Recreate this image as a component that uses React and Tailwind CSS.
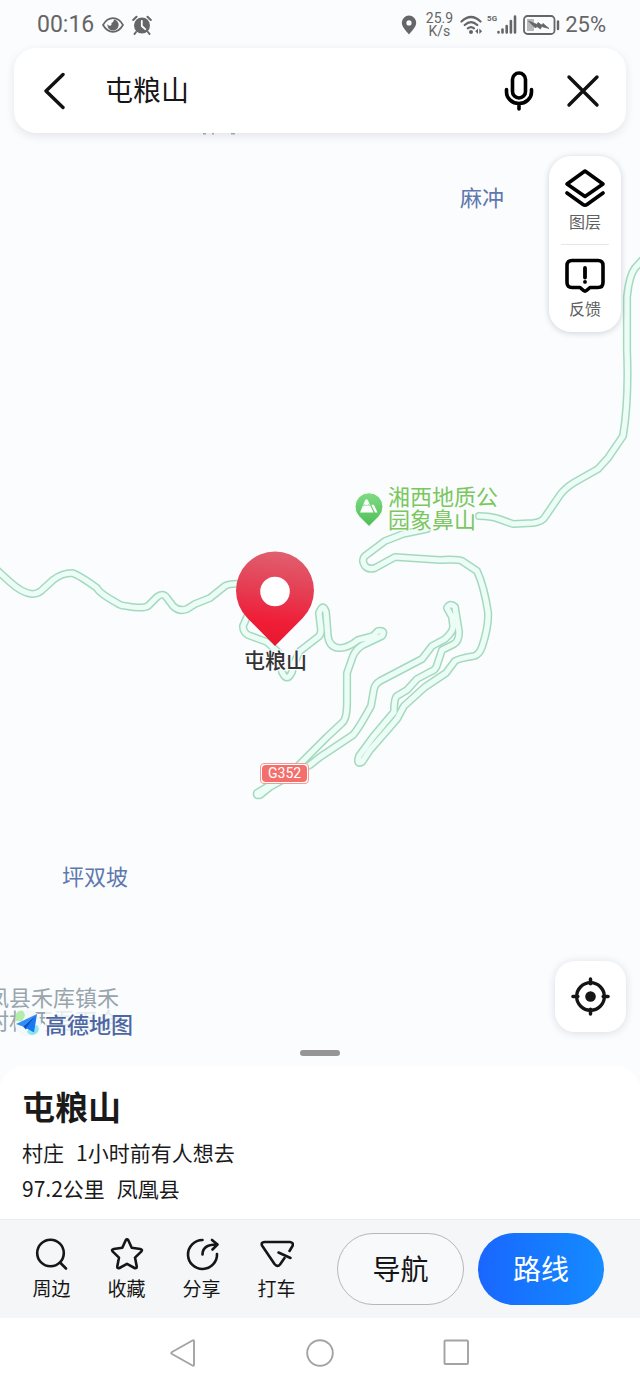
const ROADS = [
  'M-4 569 L0 573 L10 582 Q22 593 32 594 Q37 594 41 591 L53 580 Q62 573 72 573 Q79 575 97 588 Q99 593 117 603 Q121 606 126 606 Q143 609 148 606 L157 597 Q163 592 167 598 L173 606 Q179 612 187 609 L195 604 L210 598 L225 586 Q230 583 243 584 L252 600 L247 617 L243 626 Q243 632 248 635 L267 642 L278 652 L282 672 Q287 683 292 672 L294 663 L300 651 L318 637 Q321 635 321 630 L319 613 Q323 602 326 612 L328 637 Q330 648 340 648 Q348 648 358 640 L373 636 L378 631 Q386 630 382 636 L363 645 Q356 649 353 656 L347 673 L347 703 Q347 719 342 723 L327 737 L297 767 L280 779 L257 793 Q256 796 260 795 L270 787 L310 765 L320 757 L353 735 Q359 728 371 706 L374 689 Q375 684 380 681 L422 659 L432 646 L445 639 Q454 631 453 625 L452 617 L447 608 Q450 602 455 607 L459 632 Q459 641 454 644 L442 650 L437 665 Q436 670 430 672 L417 679 L407 690 L397 696 Q394 698 394 712 L373 737 L359 756 Q356 765 362 762 L370 750 L397 719 L404 706 L425 687 L446 673 L455 661 Q457 659 474 656 Q479 655 482 647 Q489 626 488 612 Q484 586 477 571 L462 561 Q458 559 440 560 L395 557 L375 568 Q369 570 365 566 Q361 560 365 556 L385 541 L403 534 L427 529',
  'M479 516 Q490 516 499 519 L513 524 L533 523 Q542 522 545 517 L560 495 Q565 488 575 482 L598 469 L608 458 L623 436 Q629 400 627 350 L627 297 Q629 276 635 268 L646 256',
];

const LABEL_HALO =
  '[text-shadow:1px_1px_0_#fafcfe,-1px_-1px_0_#fafcfe,1px_-1px_0_#fafcfe,-1px_1px_0_#fafcfe,0_0_3px_#fafcfe]';

function MapLabel({ className, children }) {
  return (
    <span className={`absolute whitespace-nowrap text-[22px] leading-[23px] ${LABEL_HALO} ${className}`}>
      {children}
    </span>
  );
}

function MapCanvas() {
  return (
    <div className="absolute inset-0 overflow-hidden">
      <div className="relative mx-auto h-full w-[640px]">
        <svg width="640" height="1066" viewBox="0 0 640 1066" fill="none" aria-hidden="true">
          <g strokeLinejoin="round" strokeLinecap="round">
            {ROADS.map((d) => (
              <path key={d} d={d} stroke="#a5d9be" strokeWidth="8.2" />
            ))}
            {ROADS.map((d) => (
              <path key={d} d={d} stroke="#ebfdf6" strokeWidth="5.2" />
            ))}
          </g>
          <path d="M203 133.5h3M212 133.5h2M231 133.5h4" stroke="#a9b0b8" strokeWidth="2" />
        </svg>

        <MapLabel className="left-[460px] top-[185px] text-[#6077ad]">麻冲</MapLabel>
        <MapLabel className="left-[62px] top-[864px] text-[#6077ad]">坪双坡</MapLabel>
        <MapLabel className="left-[388px] top-[484px] text-[#79c75d]">
          湘西地质公
          <br />
          园象鼻山
        </MapLabel>
        <MapLabel className="-left-[13px] top-[985px] text-[#98a5ab]">
          凤县禾库镇禾
          <br />
          村村丙吾百合
        </MapLabel>

        <svg className="absolute left-[354px] top-[491px]" width="30" height="37" viewBox="0 0 30 37" aria-hidden="true">
          <defs>
            <linearGradient id="parkPin" x1="0" y1="0" x2="0" y2="1">
              <stop offset="0" stopColor="#7fdc85" />
              <stop offset="1" stopColor="#4fbd55" />
            </linearGradient>
          </defs>
          <path d="M15 35.500 L5 25.500 A14 14 0 1 1 25 25.500Z" fill="url(#parkPin)" stroke="#fff" strokeWidth="1" />
          <path d="M6 21.500 L11 9.500 Q12.500 7 14 9.500 L19.500 21.500Z" fill="#fff" />
          <path d="M17.500 14.500 Q19 12.500 20.500 15 L23.500 21.500H21Z" fill="#fff" />
          <path d="M9 15l2-1.500 1.500 1.500 1.500-1.500 2 1.500" stroke="#7fdc85" fill="none" />
        </svg>

        <span className="absolute left-[260px] top-[763px] rounded border border-[#f19a98] bg-white p-px">
          <span className="block rounded-sm bg-[#f46f6c] px-[6px] font-[Roboto,sans-serif] text-sm leading-[17px] text-white">
            G352
          </span>
        </span>

        <svg className="absolute left-[234px] top-[549px]" width="82" height="98" viewBox="234 549 82 98" aria-hidden="true">
          <defs>
            <linearGradient id="placePin" x1="0.6" y1="0" x2="0.5" y2="1">
              <stop offset="0" stopColor="#e0606f" />
              <stop offset="0.45" stopColor="#e63a50" />
              <stop offset="0.75" stopColor="#f01d37" />
              <stop offset="1" stopColor="#e8162f" />
            </linearGradient>
          </defs>
          <path d="M275 646 L247.500 618.200 A39 39 0 1 1 302.500 618.200Z" fill="url(#placePin)" />
          <circle cx="275" cy="591.500" r="14.800" fill="#fff" />
        </svg>
        <span
          className={`absolute left-[244px] top-[647px] whitespace-nowrap text-[21px] font-medium leading-6 text-[#333] ${LABEL_HALO}`}
        >
          屯粮山
        </span>
      </div>
    </div>
  );
}

function StatusBar() {
  return (
    <div className="flex h-12 items-center justify-between pl-[37px] pr-[34px] pt-px font-[Roboto,sans-serif] text-[#666]">
      <div className="flex items-center gap-2">
        <span className="text-[23px] leading-6">00:16</span>
        <svg width="22" height="18" viewBox="0 0 22 18" fill="none" aria-hidden="true">
          <path d="M1 9 Q5 2.200 11 2.200 T21 9 Q17 15.800 11 15.800 T1 9Z" stroke="currentColor" strokeWidth="1.700" />
          <path d="M12 3.500 A5.600 5.600 0 1 1 5.500 8 Q6.500 10.500 8.800 9.500 Q9.800 9 9.500 7 Q11.500 6.500 12 3.500Z" fill="currentColor" />
        </svg>
        <svg width="20" height="20" viewBox="0 0 20 20" fill="none" aria-hidden="true">
          <circle cx="10" cy="10.500" r="8" fill="currentColor" />
          <path d="M1.200 5 L4.500 1.800M18.800 5 L15.500 1.800M4 17l-1.500 2M16 17l1.500 2" stroke="currentColor" strokeWidth="2" strokeLinecap="round" />
          <path d="M9.800 6v5l3.400 3.200" stroke="#fff" strokeWidth="1.800" strokeLinecap="round" />
        </svg>
      </div>

      <div className="flex items-center">
        <svg className="mr-[9px]" width="16" height="20" viewBox="0 0 16 20" aria-hidden="true">
          <path fillRule="evenodd" fill="currentColor" d="M8 19.500C5 16 .8 11.800 .8 7.800a7.200 7.200 0 0 1 14.400 0c0 4-4.200 8.200-7.200 11.700ZM8 5.300a2.600 2.600 0 1 0 0 5.200 2.600 2.600 0 0 0 0-5.200Z" />
        </svg>
        <span className="mr-[7px] text-center text-sm leading-[13px]">
          25.9
          <br />
          K/s
        </span>
        <svg className="mr-1" width="23" height="20" viewBox="0 0 23 20" fill="none" aria-hidden="true">
          <g stroke="currentColor" strokeWidth="2.200" strokeLinecap="round">
            <path d="M1.500 6.500 Q11 -2.500 20.500 6.500" />
            <path d="M4.700 10 Q11 4.300 17.300 10" />
            <path d="M7.800 13.400 Q11 10.800 14 13.400" />
          </g>
          <circle cx="11" cy="17" r="2" fill="currentColor" />
          <path d="M18 13.500v5.500l-2.800-2.700ZM19.300 13.500v5.500l2.800-2.700Z" fill="currentColor" />
        </svg>
        <span className="self-start pt-[2px] text-[8px] font-bold leading-[9px]">5G</span>
        <svg className="mr-[6px]" width="20" height="19" viewBox="0 0 20 19" fill="none" aria-hidden="true">
          <path d="M1.500 17.500v-.500M5.500 17.500v-3M9.700 17.500V11M13.900 17.500V6M18 17.500V1.500" stroke="currentColor" strokeWidth="2.600" strokeLinecap="round" />
        </svg>
        <svg className="mr-[5px]" width="37" height="20" viewBox="0 0 37 20" fill="none" aria-hidden="true">
          <rect x="1" y="1" width="30.500" height="18" rx="3.500" stroke="currentColor" strokeWidth="1.800" />
          <path d="M4 4h7v12H4Z" fill="#b9b9bb" />
          <path d="M5.500 6 L14 9.500 L15 7.500 L18.500 10 L20 8.500 L26 13.500 L18.500 11.500 L17.500 14 L14 11.500 L12.500 13Z" fill="currentColor" stroke="currentColor" strokeWidth=".8" />
          <path d="M35 6.500v7.500" stroke="currentColor" strokeWidth="2.400" strokeLinecap="round" />
        </svg>
        <span className="text-[22px] leading-6">25%</span>
      </div>
    </div>
  );
}

function SearchBar() {
  return (
    <form className="mx-[14px] flex h-[85px] items-center rounded-[22px] bg-white pl-5 pr-[23px] shadow-[0_3px_10px_rgba(30,40,60,0.10)]">
      <button type="button" aria-label="返回" className="flex size-10 items-center justify-center text-[#111]">
        <svg width="22" height="38" viewBox="0 0 22 38" fill="none" aria-hidden="true">
          <path d="M20 2.500 L3 19 L20 35.500" stroke="currentColor" strokeWidth="3.400" strokeLinecap="round" strokeLinejoin="round" />
        </svg>
      </button>
      <input
        type="text"
        aria-label="搜索地点"
        defaultValue="屯粮山"
        className="ml-[31px] h-11 min-w-0 flex-1 bg-transparent pb-1 text-[28px] leading-10 text-[#161616] outline-none"
      />
      <button type="button" aria-label="语音搜索" className="mr-6 flex size-10 items-center justify-center text-black">
        <svg width="30" height="40" viewBox="0 0 30 40" fill="none" aria-hidden="true">
          <rect x="8.500" y="2" width="13" height="25" rx="6.500" stroke="currentColor" strokeWidth="3.600" />
          <path d="M2.500 18.500v2.500a12.500 11.500 0 0 0 25 0v-2.500M15 33v5" stroke="currentColor" strokeWidth="3.600" strokeLinecap="round" />
        </svg>
      </button>
      <button type="button" aria-label="清除" className="flex size-10 items-center justify-center text-[#111]">
        <svg width="34" height="34" viewBox="0 0 34 34" fill="none" aria-hidden="true">
          <path d="M3 3 L31 31M31 3 L3 31" stroke="currentColor" strokeWidth="3.400" strokeLinecap="round" />
        </svg>
      </button>
    </form>
  );
}

function MapTools() {
  return (
    <div className="mr-[19px] mt-[23px] flex w-[72px] flex-col self-end rounded-[22px] bg-white px-3 shadow-[0_1px_6px_rgba(30,40,60,0.20)]">
      <button type="button" className="flex h-[88px] flex-col items-center pt-3 text-base leading-5 text-[#606060]">
        <svg className="mb-[3px] text-black" width="42" height="40" viewBox="0 0 42 40" fill="none" aria-hidden="true">
          <g stroke="currentColor" strokeWidth="3.600" strokeLinecap="round" strokeLinejoin="round">
            <path d="M21 3 L39 16 L21 28.500 L3 16Z" />
            <path d="M3 25 L19 36.500 Q21 38 23 36.500 L39 25" />
          </g>
        </svg>
        <span>图层</span>
      </button>
      <hr className="border-[#e6e6e8]" />
      <button type="button" className="flex h-[87px] flex-col items-center pt-3 text-base leading-5 text-[#606060]">
        <svg className="mb-[3px] text-black" width="40" height="38" viewBox="0 0 40 38" fill="none" aria-hidden="true">
          <path
            d="M7 3.500H33Q38 3.500 38 8.500V25.500Q38 30.500 33 30.500H25L21.500 33.500Q20 34.800 18.500 33.500L15 30.500H7Q2 30.500 2 25.500V8.500Q2 3.500 7 3.500Z"
            stroke="currentColor"
            strokeWidth="3.600"
            strokeLinejoin="round"
          />
          <path d="M20 11v9.500M20 24.800v.100" stroke="currentColor" strokeWidth="3.800" strokeLinecap="round" />
        </svg>
        <span>反馈</span>
      </button>
    </div>
  );
}

function MapFooter() {
  return (
    <div className="flex flex-col">
      <div className="flex items-end justify-between pl-[15px] pr-[14px]">
        <div className="-mb-1 flex items-center gap-1">
          <svg width="26" height="26" viewBox="0 0 26 26" aria-hidden="true">
            <circle cx="13" cy="13" r="13" fill="#f4f8fa" />
            <path d="M1 11 Q-1 3 4 1 Q9 -1 10 6 L7 11Z" fill="#b4ecaa" />
            <path d="M14 18 L22 15 Q26 20 21 24 Q15 27 12 22Z" fill="#8ce6f0" />
            <path d="M22 4 L1 14 L8 16.500Z" fill="#2f8ef5" />
            <path d="M22 4 L8 16.500 L11 19.500Z" fill="#0a52c8" />
            <path d="M22 4 L11 18 L19 22.500Z" fill="#1878f2" />
          </svg>
          <span className="bg-[#fafcfe]/80 text-[22px] font-medium leading-6 text-[#4d66a3]">高德地图</span>
        </div>
        <button
          type="button"
          aria-label="定位"
          className="flex size-[71px] items-center justify-center rounded-[20px] bg-white text-[#151515] shadow-[0_1px_8px_rgba(30,40,60,0.14)]"
        >
          <svg width="39" height="39" viewBox="0 0 40 40" fill="none" aria-hidden="true">
            <circle cx="20" cy="20" r="14.200" stroke="currentColor" strokeWidth="3.400" />
            <circle cx="20" cy="20" r="5.400" fill="currentColor" />
            <path d="M20 2v5M20 33v5M2 20h5M33 20h5" stroke="currentColor" strokeWidth="3.600" strokeLinecap="round" />
          </svg>
        </button>
      </div>
      <div className="mb-[10px] mt-[18px] h-[6px] w-10 self-center rounded-full bg-[#959598]" />
    </div>
  );
}

function PlaceDetails() {
  return (
    <section className="rounded-t-3xl bg-white px-[22px] pb-[13px] pt-5 text-[21px] leading-9 text-[#1a1a1a]">
      <h1 className="mb-2 text-[33px] font-bold leading-10">屯粮山</h1>
      <p className="flex gap-3">
        <span>村庄</span>
        <span>1小时前有人想去</span>
      </p>
      <p className="flex gap-3">
        <span>97.2公里</span>
        <span>凤凰县</span>
      </p>
    </section>
  );
}

function ActionIcon({ children }) {
  return (
    <svg
      width="34"
      height="34"
      viewBox="0 0 34 34"
      fill="none"
      stroke="currentColor"
      strokeWidth="2.600"
      strokeLinecap="round"
      strokeLinejoin="round"
      aria-hidden="true"
    >
      {children}
    </svg>
  );
}

const ACTIONS = [
  {
    label: '周边',
    icon: (
      <>
        <circle cx="15.500" cy="15" r="13.300" />
        <path d="M25.500 25 L31 30.500" />
      </>
    ),
  },
  {
    label: '收藏',
    icon: (
      <path d="M15.600 2.500 Q17 0 18.400 2.500 L21.700 9.800 L30.300 11 Q33 11.600 31.200 13.600 L25 19.600 L26.700 28.300 Q26.900 31 24.500 30 L17 25.800 L9.500 30 Q7.100 31 7.300 28.300 L9 19.600 L2.800 13.600 Q1 11.600 3.700 11 L12.300 9.800Z" />
    ),
  },
  {
    label: '分享',
    icon: (
      <>
        <path d="M17.500 2 A14.500 14.500 0 1 0 32 16" />
        <path d="M17.500 16.500 Q17.500 6.500 31.500 6.500" />
        <path d="M27 2 L32.500 6.500 L27.500 11.500" />
      </>
    ),
  },
  {
    label: '打车',
    icon: (
      <>
        <path d="M29.500 13 L32.500 8 Q33.800 4.500 30 4 H4.500 Q.8 4.300 2 7.500 L14.500 26 Q17.500 29.500 20 26.500 L24.500 20" />
        <path d="M18.500 14.500 L30.500 20" />
      </>
    ),
  },
];

function ActionBar() {
  return (
    <div className="flex items-center border-t border-[#ececee] bg-[#f5f6f8] py-[13px] pl-[14px] pr-9">
      <div className="grid flex-1 grid-cols-4">
        {ACTIONS.map(({ label, icon }) => (
          <button key={label} type="button" className="flex flex-col items-center gap-1 text-[19px] leading-6 text-[#161616]">
            <ActionIcon>{icon}</ActionIcon>
            <span>{label}</span>
          </button>
        ))}
      </div>
      <button type="button" className="ml-[23px] h-[72px] w-[127px] rounded-full border border-[#b5b7ba] bg-[#f8f9fb] pb-[2px] text-[28px] text-[#141414]">
        导航
      </button>
      <button type="button" className="ml-[14px] h-[72px] w-[126px] rounded-full bg-gradient-to-r from-[#1a66ff] to-[#168bff] pb-[2px] text-[28px] text-white">
        路线
      </button>
    </div>
  );
}

function SystemNav() {
  return (
    <nav className="flex h-[69px] items-center justify-center gap-[109px] bg-white text-[#a3a3a3]">
      <button type="button" aria-label="后退">
        <svg width="28" height="28" viewBox="0 0 28 28" fill="none" stroke="currentColor" strokeWidth="1.900" strokeLinejoin="round" aria-hidden="true">
          <path d="M23.500 1.500Q25 .8 25 2.500V25.500Q25 27.200 23.500 26.500L3 15Q1.500 14 3 13Z" />
        </svg>
      </button>
      <button type="button" aria-label="主屏幕">
        <svg width="28" height="28" viewBox="0 0 28 28" fill="none" stroke="currentColor" strokeWidth="1.900" aria-hidden="true">
          <circle cx="14" cy="14" r="12.800" />
        </svg>
      </button>
      <button type="button" aria-label="最近任务">
        <svg width="28" height="28" viewBox="0 0 28 28" fill="none" stroke="currentColor" strokeWidth="1.900" aria-hidden="true">
          <rect x="1.500" y="1.500" width="23.500" height="23.500" rx="1" />
        </svg>
      </button>
    </nav>
  );
}

export default function App() {
  return (
    <main className="flex min-h-screen flex-col bg-[#fafcfe] font-['Noto_Sans_CJK_SC',sans-serif]">
      <div className="relative flex min-h-[800px] flex-1 flex-col">
        <MapCanvas />
        <div className="relative flex flex-1 flex-col">
          <StatusBar />
          <SearchBar />
          <MapTools />
          <div className="flex-1" />
          <MapFooter />
        </div>
      </div>
      <PlaceDetails />
      <ActionBar />
      <SystemNav />
    </main>
  );
}
